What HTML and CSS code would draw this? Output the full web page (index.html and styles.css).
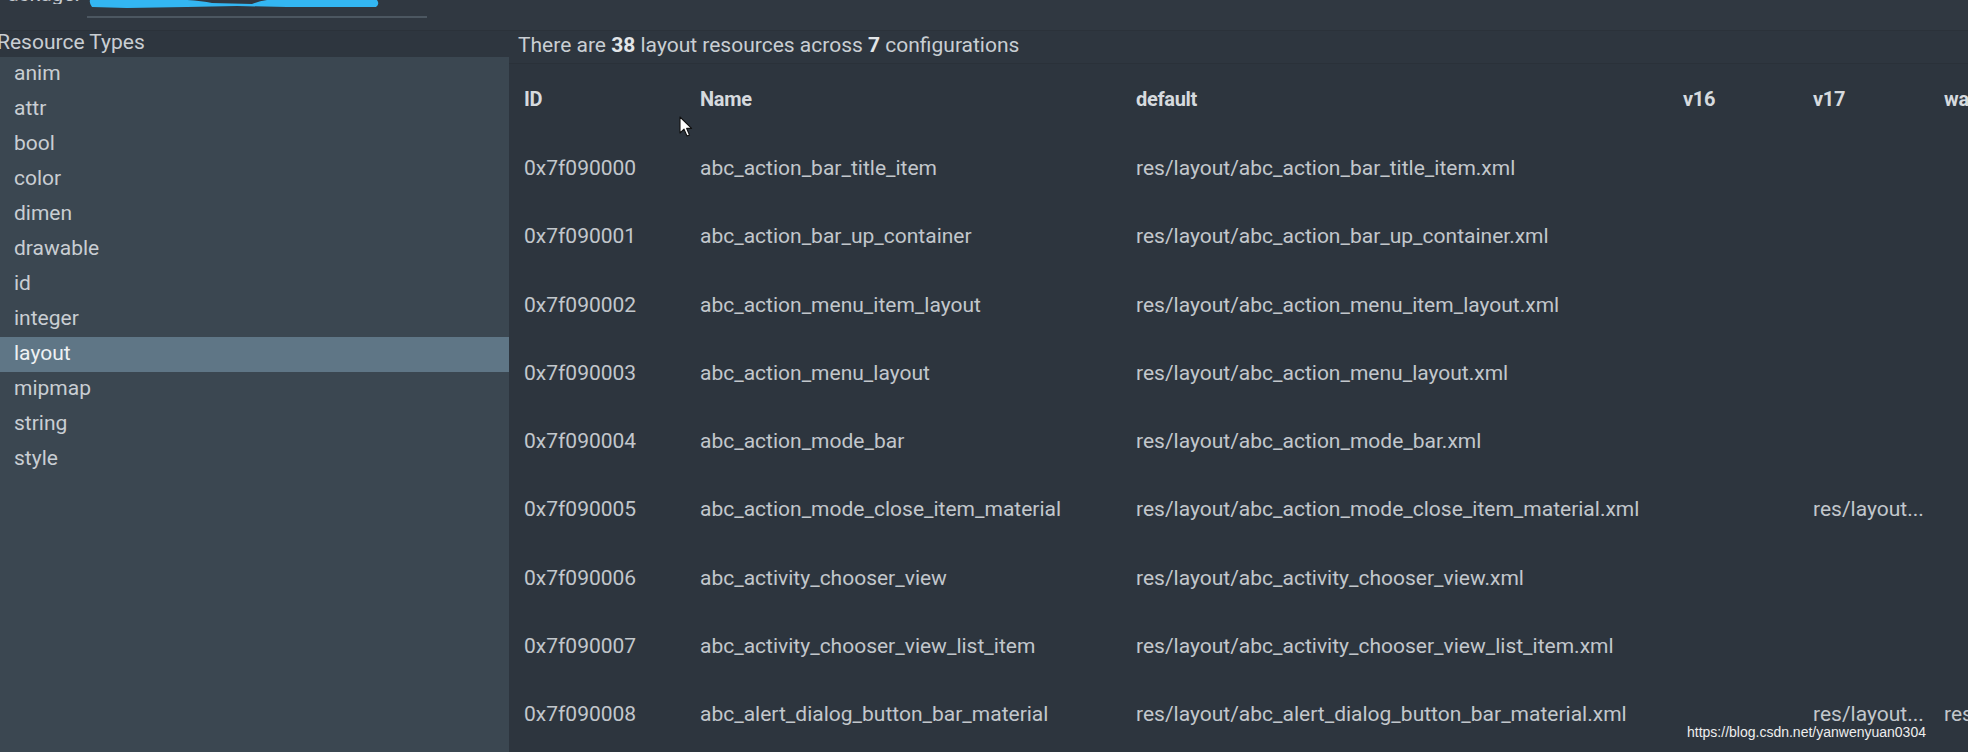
FILE: index.html
```html
<!DOCTYPE html>
<html>
<head>
<meta charset="utf-8">
<link rel="stylesheet" href="styles.css">
</head>
<body>
<div class="app">
  <div class="topbar">
    <span class="pkg-label">Package:</span>
    <div class="pkg-field">
      <svg class="scribble" width="300" height="10" viewBox="0 0 300 10"><path d="M3,0 L100,0 Q115,1 125,3 L165,4 Q172,1 180,0 L290,0 Q293,4 289,7 L200,7 L150,6 L100,7 L40,8 L5,7 Q2,3 3,0 Z" fill="#33b6f2"/></svg>
    </div>
  </div>
  <div class="main">
    <aside class="sidebar">
      <div class="sb-title">Resource Types</div>
      <ul class="sb-list">
        <li>anim</li>
        <li>attr</li>
        <li>bool</li>
        <li>color</li>
        <li>dimen</li>
        <li>drawable</li>
        <li>id</li>
        <li>integer</li>
        <li class="selected">layout</li>
        <li>mipmap</li>
        <li>string</li>
        <li>style</li>
      </ul>
    </aside>
    <section class="content">
      <div class="summary">There are <b>38</b> layout resources across <b>7</b> configurations</div>
      <div class="table">
        <div class="th">ID</div><div class="th">Name</div><div class="th">default</div><div class="th">v16</div><div class="th">v17</div><div class="th">wa</div>

        <div class="td">0x7f090000</div><div class="td">abc_action_bar_title_item</div><div class="td">res/layout/abc_action_bar_title_item.xml</div><div class="td"></div><div class="td"></div><div class="td"></div>

        <div class="td">0x7f090001</div><div class="td">abc_action_bar_up_container</div><div class="td">res/layout/abc_action_bar_up_container.xml</div><div class="td"></div><div class="td"></div><div class="td"></div>

        <div class="td">0x7f090002</div><div class="td">abc_action_menu_item_layout</div><div class="td">res/layout/abc_action_menu_item_layout.xml</div><div class="td"></div><div class="td"></div><div class="td"></div>

        <div class="td">0x7f090003</div><div class="td">abc_action_menu_layout</div><div class="td">res/layout/abc_action_menu_layout.xml</div><div class="td"></div><div class="td"></div><div class="td"></div>

        <div class="td">0x7f090004</div><div class="td">abc_action_mode_bar</div><div class="td">res/layout/abc_action_mode_bar.xml</div><div class="td"></div><div class="td"></div><div class="td"></div>

        <div class="td">0x7f090005</div><div class="td">abc_action_mode_close_item_material</div><div class="td">res/layout/abc_action_mode_close_item_material.xml</div><div class="td"></div><div class="td">res/layout...</div><div class="td"></div>

        <div class="td">0x7f090006</div><div class="td">abc_activity_chooser_view</div><div class="td">res/layout/abc_activity_chooser_view.xml</div><div class="td"></div><div class="td"></div><div class="td"></div>

        <div class="td">0x7f090007</div><div class="td">abc_activity_chooser_view_list_item</div><div class="td">res/layout/abc_activity_chooser_view_list_item.xml</div><div class="td"></div><div class="td"></div><div class="td"></div>

        <div class="td">0x7f090008</div><div class="td">abc_alert_dialog_button_bar_material</div><div class="td">res/layout/abc_alert_dialog_button_bar_material.xml</div><div class="td"></div><div class="td">res/layout...</div><div class="td">res</div>
      </div>
    </section>
  </div>
  <svg class="cursor" width="14" height="22" viewBox="0 0 14 22"><path d="M1,1 L1,17 L5,13.2 L8,20 L10.5,19 L7.6,12.4 L12.6,12.4 Z" fill="#ffffff" stroke="#111111" stroke-width="1.1" stroke-linejoin="round"/></svg>
  <div class="watermark">https://blog.csdn.net/yanwenyuan0304</div>
</div>
</body>
</html>
```
FILE: styles.css
```css
html, body {
  margin: 0;
  padding: 0;
  background: #2e363f;
  overflow: hidden;
}
.app {
  position: relative;
  width: 1968px;
  height: 752px;
  display: flex;
  flex-direction: column;
  font-family: Roboto, "Noto Sans", sans-serif;
  color: #c6cbd0;
}
.topbar {
  height: 31px;
  flex: none;
  display: flex;
  align-items: flex-start;
  background: #303841;
  overflow: hidden;
  border-bottom: 1px solid #2b323a;
  box-sizing: border-box;
}
.pkg-label {
  width: 87px;
  flex: none;
  margin-left: -6px;
  margin-top: -16px;
  font-size: 21px;
  line-height: 20px;
  color: #c6cbd0;
  overflow: hidden;
  white-space: nowrap;
}
.pkg-field {
  width: 340px;
  height: 16px;
  margin-left: 6px;
  border-bottom: 2px solid #4c5761;
  flex: none;
}
.scribble {
  display: block;
}
.main {
  flex: 1;
  display: flex;
  min-height: 0;
}
.sidebar {
  width: 509px;
  flex: none;
  display: flex;
  flex-direction: column;
}
.sb-title {
  height: 26px;
  flex: none;
  margin-left: -3px;
  font-size: 21px;
  line-height: 22px;
  color: #c9ced3;
  white-space: nowrap;
}
.sb-list {
  flex: 1;
  margin: 0;
  padding: 0;
  list-style: none;
  background: #3b4751;
}
.sb-list li {
  height: 35px;
  line-height: 33px;
  padding-left: 14px;
  font-size: 21px;
  color: #c9ced3;
}
.sb-list li.selected {
  background: #5f7686;
  color: #eef1f3;
}
.content {
  flex: 1;
  display: flex;
  flex-direction: column;
  min-width: 0;
}
.summary {
  height: 33px;
  flex: none;
  padding-left: 9px;
  font-size: 21px;
  line-height: 29px;
  color: #c9ced3;
  white-space: nowrap;
  border-bottom: 1px solid #2a3139;
  box-sizing: border-box;
}
.summary b {
  color: #e2e5e8;
}
.table {
  flex: 1;
  padding-left: 15px;
  display: grid;
  grid-template-columns: 176px 436px 547px 130px 131px 1fr;
  grid-template-rows: 70px;
  grid-auto-rows: 68.25px;
  align-items: center;
  font-size: 21px;
  overflow: hidden;
  background: #2d353e;
}
.th {
  font-size: 20px;
  font-weight: bold;
  color: #d6dade;
  white-space: nowrap;
  letter-spacing: -0.3px;
}
.td {
  white-space: nowrap;
  color: #c2c7cc;
  overflow: hidden;
}
.cursor {
  position: absolute;
  left: 679px;
  top: 116px;
}
.watermark {
  position: absolute;
  left: 1687px;
  top: 724px;
  font-family: "Liberation Sans", Arial, sans-serif;
  font-size: 14px;
  color: #eeeeee;
  white-space: nowrap;
}
```
